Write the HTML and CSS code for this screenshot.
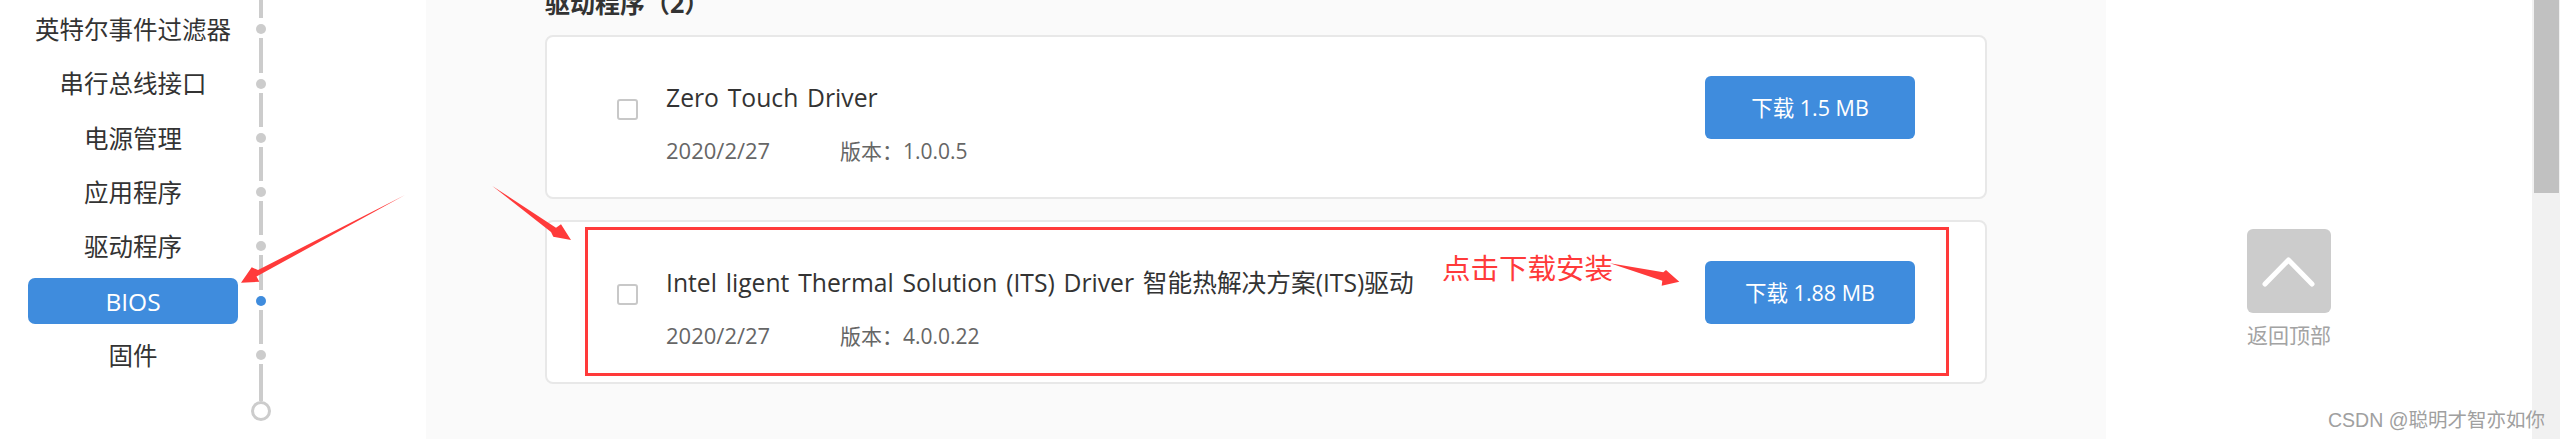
FILE: index.html
```html
<!DOCTYPE html>
<html lang="zh-CN">
<head>
  <meta charset="UTF-8" />
  <meta name="viewport" content="width=device-width, initial-scale=1.0" />
  <title>驱动程序</title>
  <link rel="stylesheet" href="styles.css">
</head>
<body>
  <div class="page">
    <nav class="sidebar">
      <div class="nav-lead"></div>
      <div class="nav-row"><a class="nav-label">英特尔事件过滤器</a><div class="tick"><i></i><b></b><i></i></div></div>
      <div class="nav-row"><a class="nav-label">串行总线接口</a><div class="tick"><i></i><b></b><i></i></div></div>
      <div class="nav-row"><a class="nav-label">电源管理</a><div class="tick"><i></i><b></b><i></i></div></div>
      <div class="nav-row"><a class="nav-label">应用程序</a><div class="tick"><i></i><b></b><i></i></div></div>
      <div class="nav-row"><a class="nav-label">驱动程序</a><div class="tick"><i></i><b></b><i></i></div></div>
      <div class="nav-row active"><a class="nav-label">BIOS</a><div class="tick"><i></i><b></b><i></i></div></div>
      <div class="nav-row"><a class="nav-label">固件</a><div class="tick"><i></i><b></b><i></i></div></div>
      <div class="nav-tail"><i></i><span class="ring"></span></div>
    </nav>

    <main class="content">
      <h2 class="section-title">驱动程序（2）</h2>

      <div class="card">
        <input class="check" type="checkbox" />
        <div class="card-body">
          <p class="card-title">Zero Touch Driver</p>
          <p class="card-meta"><span class="date">2020/2/27</span><span>版本：1.0.0.5</span></p>
        </div>
        <a class="download">下载 1.5 MB</a>
      </div>

      <div class="card">
        <input class="check" type="checkbox" />
        <div class="card-body">
          <p class="card-title">Intel ligent Thermal Solution (ITS) Driver 智能热解决方案(ITS)驱动</p>
          <p class="card-meta"><span class="date">2020/2/27</span><span>版本：4.0.0.22</span></p>
        </div>
        <a class="download">下载 1.88 MB</a>
      </div>
    </main>

    <aside class="side-right">
      <a class="back-top">
        <span class="back-box">
          <svg width="84" height="84" viewBox="0 0 84 84"><path d="M18 55 L41.500 31 L65 55" fill="none" stroke="#fff" stroke-width="5" stroke-linecap="round" stroke-linejoin="round"/></svg>
        </span>
        <span class="back-text">返回顶部</span>
      </a>
    </aside>

    <div class="scrollbar"><div class="thumb"></div></div>
  </div>

  <!-- screenshot annotations -->
  <svg class="marks" width="2560" height="439" viewBox="0 0 2560 439">
    <polygon points="405,195 258,270 251.700,267.300 241,282.700 259.300,281.700 256.500,276.500" fill="#ff3a3a"/>
    <polygon points="492.300,186 556,227.700 561,224.300 571,240 553.300,236.700 551,232" fill="#ff3a3a"/>
    <polygon points="1610,263.300 1663.300,272.300 1666,270 1679.300,281.700 1661.700,285.700 1662.300,280.700" fill="#ff3a3a"/>
    <rect x="586.500" y="228.500" width="1361" height="146" fill="none" stroke="#ff3a3a" stroke-width="3"/>
  </svg>
  <div class="note">点击下载安装</div>
  <div class="watermark">CSDN @聪明才智亦如你</div>
</body>
</html>
```

FILE: styles.css
```css
html, body {
  margin: 0;
  height: 439px;
  overflow: hidden;
}
body {
  position: relative;
  font-family: "Open Sans", "Noto Sans CJK SC", sans-serif;
  color: #333;
  background: #fff;
}
p, h2 {
  margin: 0;
}
.page {
  display: grid;
  grid-template-columns: 426px 1fr 426px 28px;
  height: 439px;
}

/* left nav */
.sidebar {
  background: #fff;
}
.nav-lead {
  width: 4px;
  height: 1px;
  margin-left: 259px;
  background: #ccc;
}
.nav-row {
  display: flex;
  height: 54.33px;
  padding-left: 28px;
}
.nav-label {
  width: 210px;
  height: 46px;
  margin-top: 5px;
  line-height: 48px;
  text-align: center;
  font-size: 24.500px;
  border-radius: 7px;
}
.active .nav-label {
  background: #3f8cdd;
  color: #fff;
}
.tick {
  display: flex;
  flex-direction: column;
  align-items: center;
  width: 10px;
  margin-left: 18px;
}
.tick i, .nav-tail i {
  display: block;
  width: 4px;
  background: #ccc;
}
.tick i {
  flex: 1;
}
.tick b {
  width: 10px;
  height: 10px;
  margin: 6px 0 4px;
  border-radius: 50%;
  background: #ccc;
}
.active .tick b {
  background: #3f8cdd;
}
.nav-tail {
  display: flex;
  flex-direction: column;
  align-items: center;
  width: 20px;
  margin-left: 251px;
}
.nav-tail i {
  height: 20px;
}
.ring {
  box-sizing: border-box;
  flex: none;
  width: 20px;
  height: 20px;
  border: 3px solid #ccc;
  border-radius: 50%;
}

/* main list */
.content {
  background: #fafafa;
  padding: 0 119px;
}
.section-title {
  margin: -13px 0 16px;
  font-size: 25px;
  line-height: 32px;
  font-weight: 700;
}
.card {
  box-sizing: border-box;
  display: flex;
  height: 163.7px;
  margin-bottom: 21.6px;
  padding-left: 70px;
  background: #fff;
  border: 2px solid #e8e8e8;
  border-radius: 8px;
}
.check {
  appearance: none;
  box-sizing: border-box;
  width: 21px;
  height: 21px;
  margin: 62px 0 0;
  border: 2px solid #c8c8c8;
  border-radius: 3px;
  background: #fff;
}
.card-body {
  flex: 1;
  margin-left: 28px;
  padding-top: 45px;
}
.card-title {
  font-size: 24.700px;
  line-height: 32px;
  word-spacing: 2.400px;
  color: #333;
}
.card-meta {
  margin-top: 21px;
  font-size: 21px;
  line-height: 30px;
  color: #666;
}
.date {
  display: inline-block;
  width: 174px;
  font-size: 22px;
}
.download {
  width: 210px;
  height: 63px;
  margin: 39px 70px 0 0;
  line-height: 63px;
  text-align: center;
  font-size: 21.500px;
  color: #fff;
  background: #3f8cdd;
  border-radius: 6px;
}

/* right column */
.side-right {
  background: #fff;
  padding: 229px 0 0 141px;
}
.back-top {
  display: flex;
  flex-direction: column;
  align-items: center;
  width: 84px;
}
.back-box {
  width: 84px;
  height: 84px;
  background: #ccc;
  border-radius: 6px;
}
.back-box svg {
  display: block;
}
.back-text {
  margin-top: 7px;
  font-size: 21px;
  line-height: 30px;
  white-space: nowrap;
  color: #a3a3a3;
}
.scrollbar {
  background: #f1f1f1;
  padding-left: 2px;
}
.thumb {
  width: 25px;
  height: 193px;
  background: #c1c1c1;
}

/* annotations sit on top of the page */
.marks {
  position: absolute;
  left: 0;
  top: 0;
}
.note {
  position: absolute;
  left: 1442px;
  top: 248px;
  font-size: 28.500px;
  line-height: 40px;
  color: #ff3a3a;
}
.watermark {
  position: absolute;
  right: 15px;
  top: 406px;
  font-family: "Liberation Sans", "Noto Sans CJK SC", sans-serif;
  font-size: 19.500px;
  line-height: 28px;
  color: #a0a0a0;
  text-shadow: 0 0 1px #fff;
}
```
